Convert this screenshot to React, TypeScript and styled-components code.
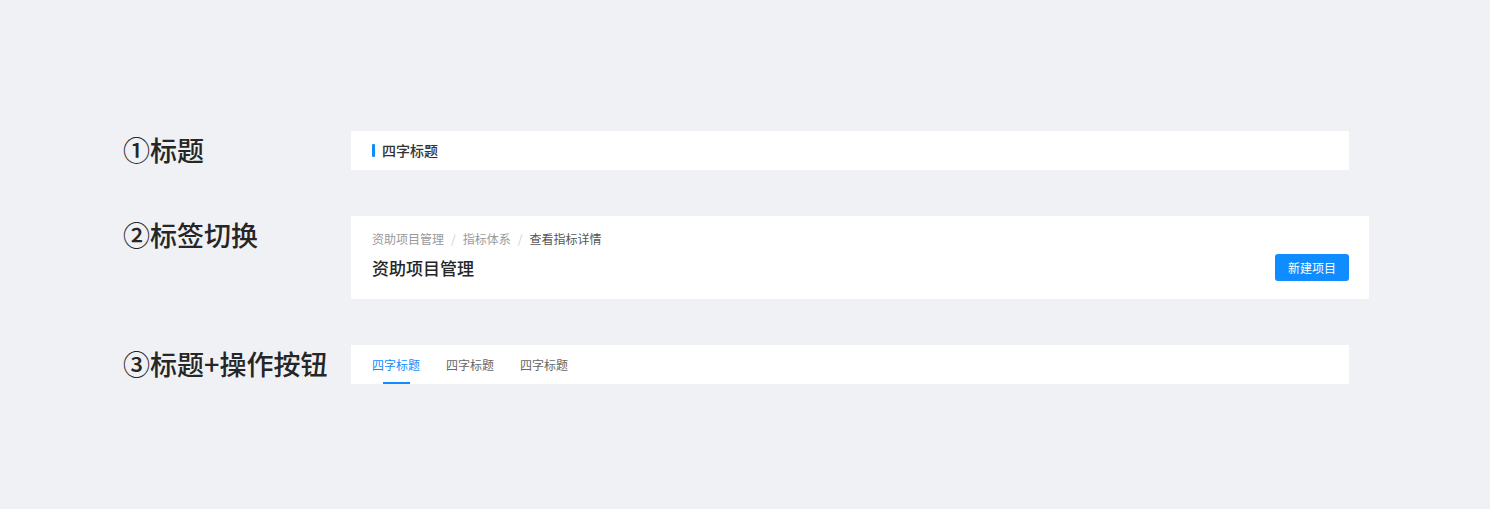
import React, { FC } from 'react';
import styled, { createGlobalStyle } from 'styled-components';

const BLUE = '#0f8cff';

const GlobalStyle = createGlobalStyle`
  html, body {
    margin: 0;
    padding: 0;
    background: #f0f1f5;
    font-family: 'Noto Sans CJK SC', 'Noto Sans', sans-serif;
  }
`;

const Page = styled.div`
  width: 1490px;
  height: 509px;
  box-sizing: border-box;
  padding: 131px 0 0 123px;
  display: grid;
  grid-template-columns: 228px auto;
  row-gap: 46px;
  align-content: start;
  align-items: start;
  justify-items: start;
`;

const Label = styled.div`
  height: 39px;
  line-height: 38px;
  font-size: 27px;
  font-weight: 500;
  color: #262626;
  white-space: nowrap;
`;

const Panel = styled.div<{ width: number }>`
  width: ${({ width }) => width}px;
  background: #fff;
  box-sizing: border-box;
`;

/* ① title bar */
const TitleBar = styled(Panel)`
  height: 39px;
  padding-left: 21px;
  display: flex;
  align-items: center;
`;

const Accent = styled.span`
  width: 3px;
  height: 13px;
  border-radius: 1px;
  background: ${BLUE};
  margin-right: 7px;
`;

const TitleText = styled.span`
  font-size: 14px;
  font-weight: 500;
  color: #333;
  line-height: 18px;
  margin-top: -1px;
`;

/* ② header with breadcrumb */
const HeaderPanel = styled(Panel)`
  padding: 12px 20px 18px 21px;
`;

const Crumbs = styled.div`
  display: flex;
  align-items: center;
  height: 20px;
  font-size: 12px;
  color: #999;
`;

const Crumb = styled.span<{ current?: boolean }>`
  color: ${({ current }) => (current ? '#555' : '#999')};
`;

const Sep = styled.span`
  color: #d0d0d0;
  margin: 0 7px;
`;

const HeaderRow = styled.div`
  margin-top: 6px;
  display: flex;
  align-items: center;
  justify-content: space-between;
  height: 27px;
`;

const PageTitle = styled.div`
  font-size: 17px;
  font-weight: 500;
  color: #262626;
`;

const Button = styled.button`
  height: 27px;
  padding: 0 13px;
  border: 0;
  border-radius: 3px;
  background: ${BLUE};
  color: #fff;
  font-family: inherit;
  font-size: 12px;
  cursor: pointer;
`;

/* ③ tabs */
const TabBar = styled(Panel)`
  height: 39px;
  padding-left: 21px;
  display: flex;
  gap: 26px;
`;

const Tab = styled.div<{ active?: boolean }>`
  position: relative;
  display: flex;
  align-items: center;
  font-size: 12px;
  color: ${({ active }) => (active ? BLUE : '#666')};

  ${({ active }) =>
    active &&
    `
    &::after {
      content: '';
      position: absolute;
      left: 50%;
      bottom: 0;
      width: 27px;
      height: 2px;
      margin-left: -13px;
      background: ${BLUE};
    }
  `}
`;

const CRUMBS = ['资助项目管理', '指标体系', '查看指标详情'];
const TABS = ['四字标题', '四字标题', '四字标题'];

const App: FC = () => (
  <>
    <GlobalStyle />
    <Page>
      <Label>①标题</Label>
      <TitleBar width={998}>
        <Accent />
        <TitleText>四字标题</TitleText>
      </TitleBar>

      <Label>②标签切换</Label>
      <HeaderPanel width={1018}>
        <Crumbs>
          {CRUMBS.map((c, i) => (
            <React.Fragment key={c}>
              {i > 0 && <Sep>/</Sep>}
              <Crumb current={i === CRUMBS.length - 1}>{c}</Crumb>
            </React.Fragment>
          ))}
        </Crumbs>
        <HeaderRow>
          <PageTitle>资助项目管理</PageTitle>
          <Button>新建项目</Button>
        </HeaderRow>
      </HeaderPanel>

      <Label>③标题+操作按钮</Label>
      <TabBar width={998}>
        {TABS.map((t, i) => (
          <Tab key={i} active={i === 0}>
            {t}
          </Tab>
        ))}
      </TabBar>
    </Page>
  </>
);

export default App;
